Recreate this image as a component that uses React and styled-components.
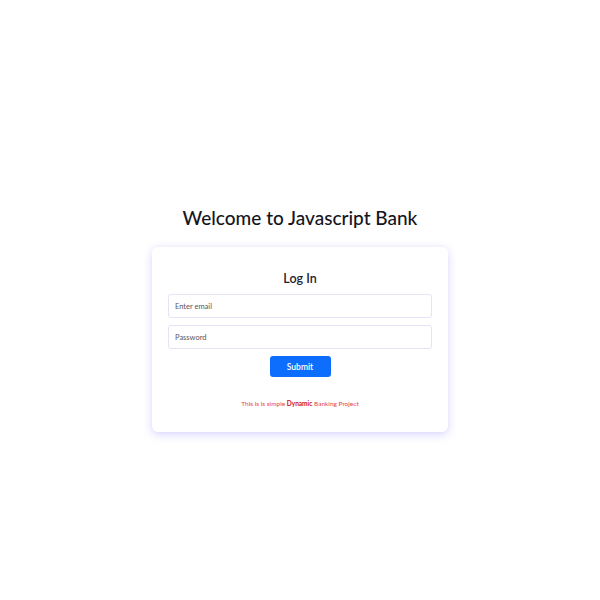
import React, { useState } from 'react';
import styled, { createGlobalStyle } from 'styled-components';

const GlobalStyle = createGlobalStyle`
  html, body {
    margin: 0;
    padding: 0;
    background: #ffffff;
    font-family: Lato, "Noto Sans", Arial, sans-serif;
  }
`;

const Page = styled.div`
  width: 600px;
  height: 600px;
  display: flex;
  flex-direction: column;
  align-items: center;
  padding-top: 205px;
  box-sizing: border-box;
`;

const Title = styled.h1`
  margin: 0 0 17px;
  font-size: 19px;
  font-weight: 500;
  color: #151521;
  line-height: 25px;
`;

const Card = styled.div`
  width: 296px;
  box-sizing: border-box;
  background: #fff;
  border-radius: 6px;
  box-shadow: 0 3px 10px rgba(110, 100, 255, 0.22), 0 0 6px rgba(110, 100, 255, 0.08);
  padding: 24px 16px 25px;
  display: flex;
  flex-direction: column;
  align-items: center;
`;

const Heading = styled.h2`
  margin: 0 0 7px;
  font-size: 12.5px;
  font-weight: 600;
  color: #222230;
  line-height: 16px;
`;

const Form = styled.form`
  width: 100%;
  display: flex;
  flex-direction: column;
  align-items: center;
  gap: 7px;
`;

const Input = styled.input`
  width: 100%;
  height: 24px;
  box-sizing: border-box;
  border: 1px solid #e4e4f6;
  border-radius: 3px;
  padding: 0 6px;
  font-family: inherit;
  font-size: 7.5px;
  color: #333;
  outline: none;
  &::placeholder {
    color: #555560;
  }
`;

const Button = styled.button`
  width: 61px;
  height: 21px;
  border: none;
  border-radius: 3px;
  background: #0d6efd;
  color: #fff;
  font-family: inherit;
  font-size: 8.5px;
  font-weight: 600;
  cursor: pointer;
`;

const Note = styled.p`
  margin: 23px 0 0;
  font-size: 6.5px;
  font-weight: 400;
  color: #e8424b;
  b {
    font-weight: 700;
    color: #d0101c;
  }
`;

export default function App() {
  const [values, setValues] = useState({ email: '', password: '' });

  const handleInputChange = e => {
    const { name, value } = e.target;
    setValues({ ...values, [name]: value });
  };

  return (
    <>
      <GlobalStyle />
      <Page>
        <Title>Welcome to Javascript Bank</Title>
        <Card>
          <Heading>Log In</Heading>
          <Form onSubmit={e => e.preventDefault()}>
            <Input name="email" placeholder="Enter email" value={values.email} onChange={handleInputChange} />
            <Input name="password" type="password" placeholder="Password" value={values.password} onChange={handleInputChange} />
            <Button type="submit">Submit</Button>
          </Form>
          <Note>This is is simple <b>Dynamic</b> Banking Project</Note>
        </Card>
      </Page>
    </>
  );
}
